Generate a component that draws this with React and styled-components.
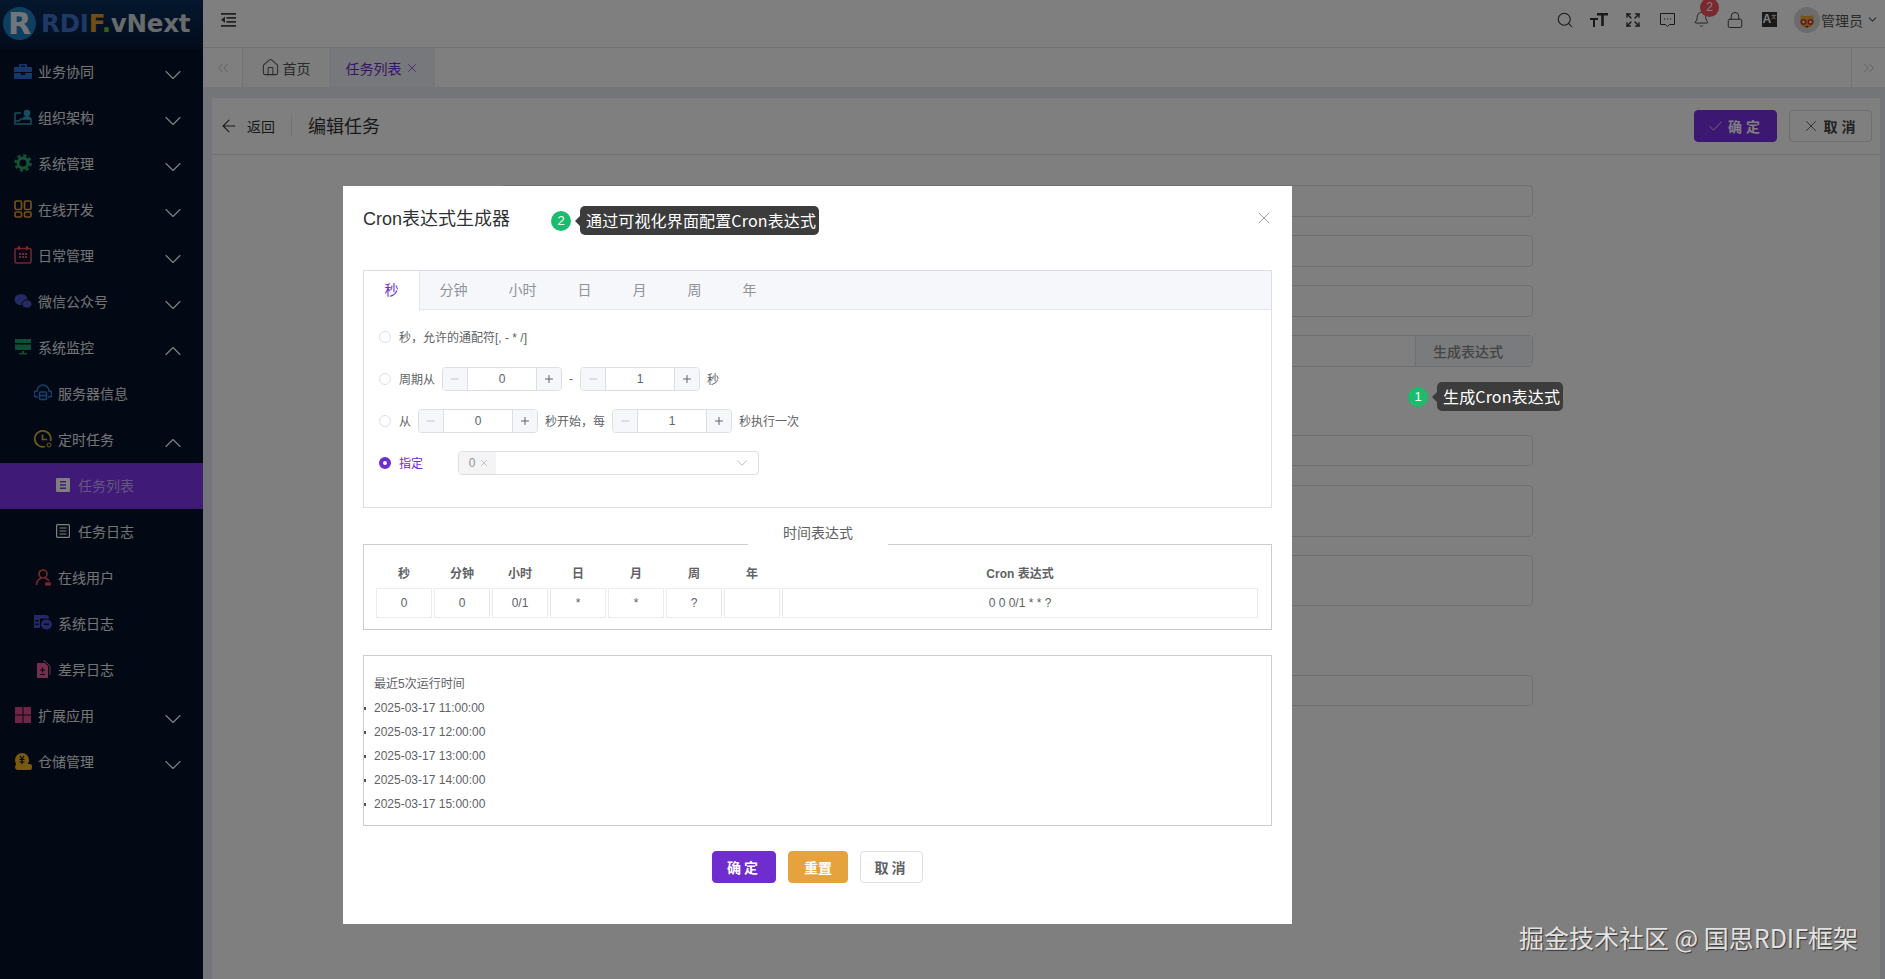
import styled, { createGlobalStyle } from "styled-components";
import {
  ArrowLeft,
  Bell,
  Check,
  ChevronDown,
  ChevronUp,
  ChevronsLeft,
  ChevronsRight,
  Expand,
  House,
  Lock,
  Minus,
  Plus,
  Search,
  X,
} from "lucide-react";

const GlobalStyle = createGlobalStyle`
  html, body, #root {
    margin: 0;
    padding: 0;
    height: 100%;
  }
  body {
    font-family: "Liberation Sans", "Noto Sans CJK SC", sans-serif;
    overflow: hidden;
  }
  * {
    box-sizing: border-box;
  }
`;

const Shell = styled.div`
  position: relative;
  display: flex;
  width: 100%;
  height: 979px;
  overflow: hidden;
`;

const Sidebar = styled.aside`
  width: 203px;
  flex: none;
  background: #04122a;
  display: flex;
  flex-direction: column;
`;
const LogoBar = styled.div`
  height: 49px;
  flex: none;
  display: flex;
  align-items: center;
  padding: 0 0 2px 3px;
  background: linear-gradient(#0a2f5c, #06193a);
`;
const LogoMark = styled.div`
  width: 33px;
  height: 33px;
  border-radius: 50%;
  background: #1f7fc0;
  color: #e6ecf0;
  font: 900 30px "DejaVu Sans", sans-serif;
  line-height: 33px;
  text-align: center;
  flex: none;
`;
const LogoText = styled.div`
  margin-left: 5px;
  font: 700 24.5px "DejaVu Sans", sans-serif;
  letter-spacing: -0.2px;
  color: #cfd6d6;
  white-space: nowrap;
`;
const LogoPart = styled.span`
  color: ${(p) => p.$color};
`;
const MenuItem = styled.div`
  height: 46px;
  flex: none;
  display: flex;
  align-items: center;
  position: relative;
  padding-left: ${(p) => p.$indent}px;
  padding-bottom: 2px;
  gap: ${(p) => (p.$level === 3 ? 8 : 6)}px;
  font-size: 14px;
  color: ${(p) => (p.$active ? "#c9a8ff" : "#e8e8e8")};
  background: ${(p) => (p.$active ? "#7e35ee" : "transparent")};
`;
const MenuIcon = styled.svg`
  width: ${(p) => (p.$level === 3 ? 14 : 18)}px;
  height: ${(p) => (p.$level === 3 ? 14 : 18)}px;
  flex: none;
`;
const MenuArrow = styled.span`
  margin-left: auto;
  margin-right: 16px;
  margin-top: 8px;
  display: flex;
  color: #fff;
`;

const Main = styled.main`
  flex: 1;
  min-width: 0;
  display: flex;
  flex-direction: column;
  background: #e7ebf1;
`;
const TopBar = styled.header`
  height: 48px;
  flex: none;
  display: flex;
  align-items: center;
  background: #fff;
  border-bottom: 1px solid #e2e2e2;
  padding: 0 0 8px 18px;
  color: #333;
`;
const TopTools = styled.div`
  margin-left: auto;
  display: flex;
  align-items: center;
  gap: 14px;
`;
const ToolBtn = styled.span`
  position: relative;
  width: 20px;
  height: 20px;
  display: flex;
  align-items: center;
  justify-content: center;
`;
const NoticeBadge = styled.span`
  position: absolute;
  top: -12px;
  left: 9px;
  width: 19px;
  height: 19px;
  border-radius: 50%;
  background: #f0555c;
  color: #fff;
  font-size: 12px;
  line-height: 19px;
  text-align: center;
`;
const TransTile = styled.span`
  width: 15px;
  height: 15px;
  display: flex;
  background: #333;
  color: #fff;
  font: 700 12px/15px "Liberation Sans", sans-serif;
  padding-left: 1px;
  overflow: hidden;
`;
const TransMark = styled.span`
  font: 5px/7px "Noto Sans CJK SC", sans-serif;
`;
const UserBox = styled.div`
  display: flex;
  align-items: center;
  margin-left: 1px;
  margin-right: 6px;
  font-size: 14px;
  color: #555;
`;
const UserCaret = styled.span`
  display: flex;
  margin-left: 3px;
`;
const Avatar = styled.svg`
  width: 26px;
  height: 26px;
  flex: none;
  margin-right: 1px;
`;

const TagsBar = styled.nav`
  height: 39px;
  flex: none;
  display: flex;
  align-items: stretch;
  background: #fff;
  color: #555;
  font-size: 14px;
`;
const TagArrow = styled.span`
  width: ${(p) => p.$width}px;
  display: flex;
  align-items: center;
  justify-content: center;
  color: #aaa;
  border-${(p) => p.$side}: 1px solid #e8e8e8;
  margin-${(p) => (p.$side === "left" ? "left" : "right")}: ${(p) => (p.$side === "left" ? "auto" : "0")};
`;
const TagItem = styled.span`
  width: ${(p) => p.$width}px;
  display: flex;
  align-items: center;
  justify-content: center;
  gap: 3px;
  margin-right: 1px;
  color: ${(p) => (p.$active ? "#6f2dd0" : "#555")};
  background: ${(p) => (p.$active ? "#edf0f6" : "#fafafa")};
`;

const Content = styled.div`
  flex: 1;
  min-height: 0;
  padding: 11px 5px 0 9px;
`;
const Card = styled.section`
  height: 100%;
  background: #fff;
`;
const CardHead = styled.div`
  height: 57px;
  display: flex;
  align-items: center;
  padding: 0 8px 0 7px;
  border-bottom: 1px solid #e4e4e4;
`;
const BackLink = styled.span`
  display: flex;
  align-items: center;
  gap: 8px;
  padding-right: 16px;
  font-size: 14px;
  color: #333;
  border-right: 1px solid #e6e6e6;
  height: 20px;
`;
const PageTitle = styled.h2`
  margin: 0 0 2px 16px;
  font-size: 18px;
  font-weight: 400;
  color: #333;
`;
const HeadActions = styled.div`
  margin-left: auto;
  display: flex;
  gap: 12px;
`;
const HeadButton = styled.span`
  width: 83px;
  height: 32px;
  display: flex;
  align-items: center;
  justify-content: center;
  gap: 4px;
  border-radius: 4px;
  font-size: 14px;
  font-weight: 700;
  letter-spacing: 4px;
  color: ${(p) => (p.$primary ? "#fff" : "#444")};
  background: ${(p) => (p.$primary ? "#7a30e6" : "#fff")};
  border: 1px solid ${(p) => (p.$primary ? "#7a30e6" : "#ddd")};
`;

const FormArea = styled.div`
  padding: 30px 347px 0 288px;
`;
const FormField = styled.div`
  height: ${(p) => p.$h}px;
  margin-bottom: ${(p) => p.$after}px;
  display: flex;
  justify-content: flex-end;
  border: 1px solid #dcdfe6;
  border-radius: 4px;
`;
const FieldAddon = styled.span`
  width: 117px;
  display: flex;
  align-items: center;
  justify-content: center;
  padding-right: 12px;
  background: #f5f7fa;
  border-left: 1px solid #dcdfe6;
  color: #888;
  font-size: 14px;
  font-weight: 500;
`;

/* the grey mask and the dialog lie over the whole page */
const Mask = styled.div`
  position: absolute;
  inset: 0;
  background: rgba(0, 0, 0, 0.5);
  display: flex;
  justify-content: flex-start;
  padding: 186px 0 0 343px;
`;
const Dialog = styled.div`
  width: 949px;
  height: 738px;
  background: #fff;
  padding: 0 20px;
  position: relative;
  color: #606266;
  font-size: 12px;
`;
const DialogHead = styled.div`
  height: 84px;
  display: flex;
  align-items: flex-start;
  padding-top: 20px;
`;
const DialogTitle = styled.h3`
  margin: 0;
  font-size: 18px;
  line-height: 26px;
  font-weight: 400;
  color: #303133;
`;
const CloseBtn = styled.span`
  position: absolute;
  top: 22px;
  right: 18px;
  display: flex;
  color: #909399;
`;

const TabsBox = styled.div`
  height: 238px;
  border: 1px solid #dcdfe6;
`;
const TabList = styled.div`
  height: 39px;
  display: flex;
  background: #f5f7fa;
  border-bottom: 1px solid #e4e7ed;
`;
const TabItem = styled.span`
  padding: 0 20.5px;
  line-height: 39px;
  font-size: 14px;
  height: ${(p) => (p.$active ? 40 : 39)}px;
  margin-right: ${(p) => (p.$active ? -1 : 0)}px;
  color: ${(p) => (p.$active ? "#6f2dd0" : "#909399")};
  background: ${(p) => (p.$active ? "#fff" : "transparent")};
  border-right: ${(p) => (p.$active ? "1px solid #e4e7ed" : "none")};
`;
const TabBody = styled.div`
  padding: 5.5px 15px;
`;
const RadioRow = styled.div`
  height: 42px;
  display: flex;
  align-items: center;
  gap: 7px;
  white-space: nowrap;
  color: ${(p) => (p.$on ? "#6f2dd0" : "#606266")};
`;
const RadioDot = styled.span`
  width: 12px;
  height: 12px;
  border-radius: 50%;
  flex: none;
  margin-right: 1px;
  border: ${(p) => (p.$on ? "4px solid #6f2dd0" : "1px solid #dcdfe6")};
  background: #fff;
`;
const NumberBox = styled.span`
  width: 120px;
  height: 24px;
  display: flex;
  border: 1px solid #dcdfe6;
  border-radius: 4px;
  overflow: hidden;
`;
const StepBtn = styled.span`
  width: 24px;
  flex: none;
  display: flex;
  align-items: center;
  justify-content: center;
  background: #f5f7fa;
  color: ${(p) => (p.$off ? "#c0c4cc" : "#606266")};
`;
const NumberValue = styled.span`
  flex: 1;
  text-align: center;
  line-height: 22px;
  border-left: 1px solid #dcdfe6;
  border-right: 1px solid #dcdfe6;
`;
const SelectBox = styled.span`
  width: 301px;
  height: 24px;
  margin-left: 28px;
  display: flex;
  align-items: center;
  padding-right: 7px;
  justify-content: space-between;
  border: 1px solid #dcdfe6;
  border-radius: 4px;
  overflow: hidden;
`;
const SelectTag = styled.span`
  height: 22px;
  width: 37px;
  padding-left: 3px;
  display: flex;
  align-items: center;
  justify-content: center;
  gap: 4px;
  background: #f4f4f5;
  color: #909399;
`;

const ExprBox = styled.div`
  position: relative;
  margin-top: 36px;
  height: 86px;
  border: 1px solid #ccc;
  padding: 13px 13px 0 12px;
`;
const ExprLegend = styled.span`
  position: absolute;
  top: -24px;
  left: 384px;
  width: 140px;
  height: 36px;
  line-height: 24px;
  background: #fff;
  text-align: center;
  font-size: 14px;
  color: #606266;
`;
const ExprGrid = styled.div`
  display: grid;
  grid-template-columns: repeat(7, 56px) 1fr;
  grid-template-rows: 30px 30px;
  column-gap: 2px;
  text-align: center;
`;
const ExprHead = styled.span`
  font-weight: 700;
  line-height: 32px;
`;
const ExprCell = styled.span`
  border: 1px solid #ebebeb;
  line-height: 28px;
`;
const RunBox = styled.div`
  margin-top: 25px;
  height: 171px;
  border: 1px solid #ccc;
  padding: 16px 10px 0;
  overflow: hidden;
`;
const RunTitle = styled.div`
  line-height: 24px;
`;
const RunList = styled.ul`
  margin: 0;
  padding: 0;
  list-style: none;
`;
const RunItem = styled.li`
  position: relative;
  line-height: 24px;
  &::before {
    content: "";
    position: absolute;
    left: -10px;
    top: 11px;
    width: 2px;
    height: 3px;
    background: #555;
  }
`;
const DialogFoot = styled.div`
  margin-top: 25px;
  display: flex;
  justify-content: center;
  gap: 12px;
`;
const FootButton = styled.span`
  width: ${(p) => p.$width}px;
  height: 32px;
  display: flex;
  align-items: center;
  justify-content: center;
  border-radius: 4px;
  font-size: 14px;
  font-weight: 700;
  letter-spacing: ${(p) => (p.$spaced ? "3px" : "0")};
  color: ${(p) => p.$fg};
  background: ${(p) => p.$bg};
  border: 1px solid ${(p) => p.$line};
`;

const Note = styled.div`
  position: absolute;
  left: ${(p) => p.$x}px;
  top: ${(p) => p.$y}px;
  display: flex;
  align-items: center;
`;
const NoteDot = styled.span`
  width: 20px;
  height: 20px;
  border-radius: 50%;
  background: #1dbb6c;
  color: #fff;
  font-size: 13px;
  line-height: 20px;
  text-align: center;
  margin-right: 9px;
`;
const NoteTip = styled.span`
  position: relative;
  height: 29px;
  padding: 0 3px 0 6px;
  border-radius: 5px;
  background: #3c3c3c;
  color: #fff;
  font: 16px/29px "Noto Sans CJK SC", sans-serif;
  letter-spacing: 0.15px;
  white-space: nowrap;
  &::before {
    content: "";
    position: absolute;
    left: -5px;
    top: 10px;
    border-style: solid;
    border-width: 5px 5px 5px 0;
    border-color: transparent #3c3c3c transparent transparent;
  }
`;
const Watermark = styled.div`
  position: absolute;
  right: 27px;
  bottom: 27px;
  color: #e2e2e2;
  font: 25px/30px "Noto Sans CJK SC", sans-serif;
  text-shadow: 1px 1px 1px #333;
  white-space: nowrap;
`;

const TextSizeIcon = () => (
  <svg width="20" height="20" viewBox="0 0 20 20" fill="#333">
    <path d="M1 8h8v2H6v7H4v-7H1z" />
    <path d="M8 3h11v2.4h-4.2V16h-2.6V5.4H8z" />
  </svg>
);

const CollapseIcon = () => (
  <svg width="16" height="14" viewBox="0 0 16 14" fill="#444">
    <path d="M0 0h15v1.8H0zM5.5 4H15v1.8H5.5zM5.5 8H15v1.8H5.5zM0 12h15v1.8H0zM4 3.5v6.5L0 6.8z" />
  </svg>
);

const ChatIcon = () => (
  <svg width="17" height="17" viewBox="0 0 17 17" fill="none" stroke="#333" strokeWidth="1">
    <path d="M1.500 2.500h14v11h-5l-2 2-2-2h-5z" />
    <path d="M5 8h1.200M8 8h1.200M11 8h1.200" strokeWidth="1.200" />
  </svg>
);

const TigerAvatar = () => (
  <Avatar viewBox="0 0 26 26">
    <circle cx="13" cy="13" r="13" fill="#d8d8d8" />
    <path d="M7 8l3 1h6l3-1 1 7-3 5H9l-3-5z" fill="#e8a73c" />
    <circle cx="9.5" cy="15" r="3" fill="#d8332c" />
    <circle cx="16.5" cy="15" r="3" fill="#d8332c" />
    <circle cx="9.5" cy="15" r="1.2" fill="#fff" />
    <circle cx="16.5" cy="15" r="1.2" fill="#fff" />
    <path d="M11 19h4l-2 2z" fill="#7a2a12" />
  </Avatar>
);

const icons = {
  work: (
    <path fill="#2a6fd8" d="M6 2h6a1 1 0 0 1 1 1v2h4a1 1 0 0 1 1 1v4H0V6a1 1 0 0 1 1-1h4V3a1 1 0 0 1 1-1zm1 1.500V5h4V3.500zM0 11h7v2h4v-2h7v5a1 1 0 0 1-1 1H1a1 1 0 0 1-1-1z" />
  ),
  org: (
    <g fill="none" stroke="#2f9bb8" strokeWidth="1.5">
      <path d="M1 5v11h16v-5H7l-2 2H1M1 5h6" />
      <circle cx="13" cy="5" r="2.500" fill="#2f9bb8" />
      <path d="M9.500 11c0-3 7-3 7 0" fill="#2f9bb8" />
    </g>
  ),
  gear: (
    <g fill="none" stroke="#2aa86a">
      <circle cx="9" cy="9" r="5" strokeWidth="3" />
      <circle cx="9" cy="9" r="7.500" strokeWidth="2.500" strokeDasharray="3 2.900" />
    </g>
  ),
  dev: (
    <g fill="none" stroke="#e8a030" strokeWidth="1.700">
      <rect x="1" y="1" width="6.500" height="8.500" rx="1.500" />
      <rect x="10.500" y="1" width="6.500" height="8.500" rx="1.500" />
      <rect x="1" y="12" width="6.500" height="5" rx="1.500" />
      <rect x="10.500" y="12" width="6.500" height="5" rx="1.500" />
    </g>
  ),
  calendar: (
    <g>
      <rect x="1" y="2.500" width="16" height="14.500" rx="1.500" fill="none" stroke="#e84a5f" strokeWidth="1.600" />
      <path fill="#e84a5f" d="M4 0h2v4H4zM12 0h2v4h-2zM5 7h2v2H5zM8 7h2v2H8zM11 7h2v2h-2zM8 10h2v2H8zM11 10h2v2h-2zM5 10h2v2H5z" />
    </g>
  ),
  wechat: (
    <g fill="#4a55c8">
      <ellipse cx="7" cy="7.500" rx="6.500" ry="5.500" />
      <ellipse cx="13" cy="12" rx="5" ry="4.200" stroke="#04122a" />
    </g>
  ),
  monitor: (
    <path fill="#1f9a6a" d="M1 1h16v4H1zM1 6.500h16V11a1 1 0 0 1-1 1H2a1 1 0 0 1-1-1zM8 13h2v2h3v1.500H5V15h3z" />
  ),
  cloud: (
    <g fill="none" stroke="#2a7fe0" strokeWidth="1.600">
      <path d="M4 13H3a2.500 2.500 0 0 1 0-6 6 6 0 0 1 12 0 2.500 2.500 0 0 1 0 6h-1" />
      <rect x="5.500" y="8" width="7" height="7.500" rx="1" />
      <path d="M5.500 11.500h7" />
    </g>
  ),
  clock: (
    <g fill="none" stroke="#e0b030" strokeWidth="1.700">
      <path d="M16.500 11A8 8 0 1 0 11 16.500" />
      <path d="M8.500 4.500v5h4.500" />
      <circle cx="15" cy="15" r="2" strokeWidth="1" />
    </g>
  ),
  fileFill: (
    <path fill="#fff" fillRule="evenodd" d="M1 0h12a1 1 0 0 1 1 1v12a1 1 0 0 1-1 1H1a1 1 0 0 1-1-1V1a1 1 0 0 1 1-1zm3 3v1.500h6V3zm0 3.200v1.500h6V6.200zm0 3.300V11h6V9.500z" />
  ),
  fileLine: (
    <g fill="none" stroke="#fff" strokeWidth="1.200">
      <rect x=".6" y=".6" width="12.800" height="12.800" rx="1" />
      <path d="M3.500 4h7M3.500 7h7M3.500 10h7" />
    </g>
  ),
  user: (
    <g fill="none" stroke="#f0504a" strokeWidth="1.700">
      <circle cx="9" cy="6" r="4" />
      <path d="M2.500 17c0-4 2.500-6 5-7M11 10c1.500.5 3 1.500 4 3" />
      <path d="M12 15h4v2h-4z" fill="#f0504a" />
    </g>
  ),
  logs: (
    <g fill="#4a50d0">
      <path d="M0 1h13l2 2v1.500H6V14H0z" />
      <rect x="7" y="5.500" width="11" height="10" rx="5" />
      <path fill="#04122a" d="M1.500 6h3v1.500h-3zM1.500 9.500h3V11h-3zM10 9.500h5V11h-5z" />
    </g>
  ),
  diff: (
    <g>
      <path fill="#ee5a9c" d="M3 3h8l3 3v12H3z" />
      <path fill="none" stroke="#ee5a9c" d="M9 1h2l5 5v9" />
      <path stroke="#04122a" strokeWidth="1.200" d="M6 10h5M8.500 7.500v5M6 14.500h5" />
    </g>
  ),
  apps: (
    <path fill="#e24a8a" d="M1 1h7.500v7.500H1zM9.500 1H17v7.500H9.500zM1 9.500h7.500V17H1zM9.500 9.500H17V17H9.500z" />
  ),
  store: (
    <g>
      <circle cx="8" cy="8" r="7" fill="#f0b420" />
      <path fill="#f0b420" d="M2 12h14a2 2 0 0 1 2 2v2a2 2 0 0 1-2 2H4a3 3 0 0 1-3-3z" />
      <path stroke="#04122a" strokeWidth="1.200" fill="none" d="M6 4l2 3 2-3M5.500 7.500h5M8 7v5M5.500 10h5" />
    </g>
  ),
};

const menu = [
  { key: "work", label: "业务协同", level: 1, arrow: "down" },
  { key: "org", label: "组织架构", level: 1, arrow: "down" },
  { key: "gear", label: "系统管理", level: 1, arrow: "down" },
  { key: "dev", label: "在线开发", level: 1, arrow: "down" },
  { key: "calendar", label: "日常管理", level: 1, arrow: "down" },
  { key: "wechat", label: "微信公众号", level: 1, arrow: "down" },
  { key: "monitor", label: "系统监控", level: 1, arrow: "up" },
  { key: "cloud", label: "服务器信息", level: 2 },
  { key: "clock", label: "定时任务", level: 2, arrow: "up" },
  { key: "fileFill", label: "任务列表", level: 3, active: true },
  { key: "fileLine", label: "任务日志", level: 3 },
  { key: "user", label: "在线用户", level: 2 },
  { key: "logs", label: "系统日志", level: 2 },
  { key: "diff", label: "差异日志", level: 2 },
  { key: "apps", label: "扩展应用", level: 1, arrow: "down" },
  { key: "store", label: "仓储管理", level: 1, arrow: "down" },
];

const indents = { 1: 14, 2: 34, 3: 56 };

const formFields = [
  { h: 32, after: 18 },
  { h: 32, after: 18 },
  { h: 32, after: 18 },
  { h: 32, after: 68, addon: "生成表达式" },
  { h: 31, after: 19 },
  { h: 52, after: 18 },
  { h: 51, after: 69 },
  { h: 31, after: 0 },
];

const tabs = ["秒", "分钟", "小时", "日", "月", "周", "年"];
const exprHeads = ["秒", "分钟", "小时", "日", "月", "周", "年", "Cron 表达式"];
const exprValues = ["0", "0", "0/1", "*", "*", "?", "", "0 0 0/1 * * ?"];
const runTimes = [
  "2025-03-17 11:00:00",
  "2025-03-17 12:00:00",
  "2025-03-17 13:00:00",
  "2025-03-17 14:00:00",
  "2025-03-17 15:00:00",
];

function NumberInput({ value }) {
  return (
    <NumberBox>
      <StepBtn $off>
        <Minus size={12} />
      </StepBtn>
      <NumberValue>{value}</NumberValue>
      <StepBtn>
        <Plus size={12} />
      </StepBtn>
    </NumberBox>
  );
}

function SideMenu() {
  return (
    <Sidebar>
      <LogoBar>
        <LogoMark>R</LogoMark>
        <LogoText>
          <LogoPart $color="#3a72c8">RDI</LogoPart>
          <LogoPart $color="#e09a20">F</LogoPart>
          <LogoPart $color="#6cc030">.</LogoPart>
          vNext
        </LogoText>
      </LogoBar>
      {menu.map((item) => (
        <MenuItem
          key={item.label}
          $indent={indents[item.level]}
          $level={item.level}
          $active={item.active}
        >
          <MenuIcon
            $level={item.level}
            viewBox={item.level === 3 ? "0 0 14 14" : "0 0 18 18"}
          >
            {icons[item.key]}
          </MenuIcon>
          {item.label}
          {item.arrow && (
            <MenuArrow>
              {item.arrow === "down" ? (
                <ChevronDown size={28} strokeWidth={1} />
              ) : (
                <ChevronUp size={28} strokeWidth={1} />
              )}
            </MenuArrow>
          )}
        </MenuItem>
      ))}
    </Sidebar>
  );
}

function Page() {
  return (
    <Main>
      <TopBar>
        <CollapseIcon />
        <TopTools>
          <ToolBtn>
            <Search size={18} strokeWidth={1.4} />
          </ToolBtn>
          <ToolBtn>
            <TextSizeIcon />
          </ToolBtn>
          <ToolBtn>
            <Expand size={16} strokeWidth={2} />
          </ToolBtn>
          <ToolBtn>
            <ChatIcon />
          </ToolBtn>
          <ToolBtn>
            <Bell size={17} strokeWidth={1.3} />
            <NoticeBadge>2</NoticeBadge>
          </ToolBtn>
          <ToolBtn>
            <Lock size={18} strokeWidth={1.2} />
          </ToolBtn>
          <ToolBtn>
            <TransTile>
              A<TransMark>文</TransMark>
            </TransTile>
          </ToolBtn>
          <UserBox>
            <TigerAvatar />
            管理员
            <UserCaret>
              <ChevronDown size={13} />
            </UserCaret>
          </UserBox>
        </TopTools>
      </TopBar>
      <TagsBar>
        <TagArrow $width={40} $side="right">
          <ChevronsLeft size={18} strokeWidth={1} />
        </TagArrow>
        <TagItem $width={85}>
          <House size={19} strokeWidth={1.3} />
          首页
        </TagItem>
        <TagItem $width={106} $active>
          任务列表
          <X size={14} strokeWidth={1.2} />
        </TagItem>
        <TagArrow $width={34} $side="left">
          <ChevronsRight size={18} strokeWidth={1} />
        </TagArrow>
      </TagsBar>
      <Content>
        <Card>
          <CardHead>
            <BackLink>
              <ArrowLeft size={20} strokeWidth={1.3} />
              返回
            </BackLink>
            <PageTitle>编辑任务</PageTitle>
            <HeadActions>
              <HeadButton $primary>
                <Check size={17} strokeWidth={1.1} />
                确定
              </HeadButton>
              <HeadButton>
                <X size={18} strokeWidth={1.1} />
                取消
              </HeadButton>
            </HeadActions>
          </CardHead>
          <FormArea>
            {formFields.map((f, i) => (
              <FormField key={i} $h={f.h} $after={f.after}>
                {f.addon && <FieldAddon>{f.addon}</FieldAddon>}
              </FormField>
            ))}
          </FormArea>
        </Card>
      </Content>
    </Main>
  );
}

function CronDialog() {
  return (
    <Dialog>
      <DialogHead>
        <DialogTitle>Cron表达式生成器</DialogTitle>
        <CloseBtn>
          <X size={20} strokeWidth={1.1} />
        </CloseBtn>
      </DialogHead>
      <TabsBox>
        <TabList>
          {tabs.map((t, i) => (
            <TabItem key={t} $active={i === 0}>
              {t}
            </TabItem>
          ))}
        </TabList>
        <TabBody>
          <RadioRow>
            <RadioDot />
            秒，允许的通配符[, - * /]
          </RadioRow>
          <RadioRow>
            <RadioDot />
            周期从
            <NumberInput value="0" />
            -
            <NumberInput value="1" />秒
          </RadioRow>
          <RadioRow>
            <RadioDot />从
            <NumberInput value="0" />
            秒开始，每
            <NumberInput value="1" />
            秒执行一次
          </RadioRow>
          <RadioRow $on>
            <RadioDot $on />
            指定
            <SelectBox>
              <SelectTag>
                0<X size={10} strokeWidth={1.2} />
              </SelectTag>
              <ChevronDown size={18} strokeWidth={1} color="#a0a4ac" />
            </SelectBox>
          </RadioRow>
        </TabBody>
      </TabsBox>
      <ExprBox>
        <ExprLegend>时间表达式</ExprLegend>
        <ExprGrid>
          {exprHeads.map((h) => (
            <ExprHead key={h}>{h}</ExprHead>
          ))}
          {exprValues.map((v, i) => (
            <ExprCell key={i}>{v}</ExprCell>
          ))}
        </ExprGrid>
      </ExprBox>
      <RunBox>
        <RunTitle>最近5次运行时间</RunTitle>
        <RunList>
          {runTimes.map((t) => (
            <RunItem key={t}>{t}</RunItem>
          ))}
        </RunList>
      </RunBox>
      <DialogFoot>
        <FootButton $width={64} $spaced $fg="#fff" $bg="#6f2dd0" $line="#6f2dd0">
          确定
        </FootButton>
        <FootButton $width={60} $fg="#fff" $bg="#e6a23c" $line="#e6a23c">
          重置
        </FootButton>
        <FootButton $width={63} $spaced $fg="#606266" $bg="#fff" $line="#dcdfe6">
          取消
        </FootButton>
      </DialogFoot>
    </Dialog>
  );
}

export default function App() {
  return (
    <>
      <GlobalStyle />
      <Shell>
        <SideMenu />
        <Page />
        <Mask>
          <CronDialog />
        </Mask>
        <Note $x={551} $y={206}>
          <NoteDot>2</NoteDot>
          <NoteTip>通过可视化界面配置Cron表达式</NoteTip>
        </Note>
        <Note $x={1408} $y={382}>
          <NoteDot>1</NoteDot>
          <NoteTip>生成Cron表达式</NoteTip>
        </Note>
        <Watermark>掘金技术社区 @ 国思RDIF框架</Watermark>
      </Shell>
    </>
  );
}
